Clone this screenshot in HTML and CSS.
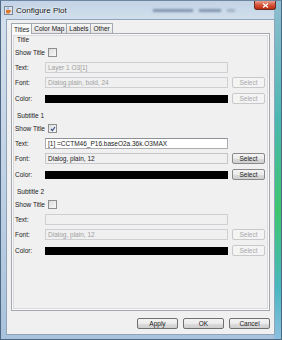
FILE: index.html
```html
<!DOCTYPE html>
<html lang="en">
<head>
    <meta charset="UTF-8">
    <title>Configure Plot</title>
    <link rel="stylesheet" href="styles.css">
</head>
<body>
    <div class="window">
        <div class="titlebar">
            <svg class="app-icon" width="9" height="9" viewBox="0 0 9 9">
                <rect x="0.5" y="0.5" width="8" height="8" fill="#dfe6ee" stroke="#7d8a99"/>
                <path d="M2 4h4v2.5a1 1 0 0 1-1 1h-2a1 1 0 0 1-1-1z" fill="#e07a2a"/>
                <path d="M6 4.5h1v1.2h-1" fill="none" stroke="#e07a2a" stroke-width="0.7"/>
                <path d="M3.2 1.5c-.6.8.6 1.2 0 2M4.6 1.5c-.6.8.6 1.2 0 2" fill="none" stroke="#4a6ea8" stroke-width="0.6"/>
            </svg>
            <span class="caption">Configure Plot</span>
            <div class="ghost">
                <span></span><span></span><span></span>
            </div>
            <div class="close-btn">
                <svg width="7" height="5" viewBox="0 0 7 5"><path d="M1 0.5l5 4M6 0.5l-5 4" stroke="#fff" stroke-width="1.3"/></svg>
            </div>
        </div>

        <div class="frame">
            <div class="client">
                <div class="tabs">
                    <div class="tab active">Titles</div>
                    <div class="tab">Color Map</div>
                    <div class="tab">Labels</div>
                    <div class="tab">Other</div>
                </div>

                <div class="tab-panel">
                    <!-- Title -->
                    <section class="group">
                        <div class="group-title">Title</div>
                        <div class="row">
                            <span class="lbl">Show Title</span>
                            <span class="check"></span>
                        </div>
                        <div class="row">
                            <span class="lbl">Text:</span>
                            <div class="field disabled">Layer 1 O3[1]</div>
                        </div>
                        <div class="row">
                            <span class="lbl">Font:</span>
                            <div class="field disabled">Dialog.plain, bold, 24</div>
                            <button class="select" disabled>Select</button>
                        </div>
                        <div class="row">
                            <span class="lbl">Color:</span>
                            <div class="swatch"></div>
                            <button class="select" disabled>Select</button>
                        </div>
                    </section>

                    <!-- Subtitle 1 -->
                    <section class="group">
                        <div class="group-title">Subtitle 1</div>
                        <div class="row">
                            <span class="lbl">Show Title</span>
                            <span class="check checked">
                                <svg width="6" height="6" viewBox="0 0 6 6"><path d="M1 3l1.5 1.6L5 1" fill="none" stroke="#2d4a86" stroke-width="1.1"/></svg>
                            </span>
                        </div>
                        <div class="row">
                            <span class="lbl">Text:</span>
                            <div class="field">[1] =CCTM46_P16.baseO2a.36k.O3MAX</div>
                        </div>
                        <div class="row">
                            <span class="lbl">Font:</span>
                            <div class="field readonly">Dialog, plain, 12</div>
                            <button class="select">Select</button>
                        </div>
                        <div class="row">
                            <span class="lbl">Color:</span>
                            <div class="swatch"></div>
                            <button class="select">Select</button>
                        </div>
                    </section>

                    <!-- Subtitle 2 -->
                    <section class="group">
                        <div class="group-title">Subtitle 2</div>
                        <div class="row">
                            <span class="lbl">Show Title</span>
                            <span class="check"></span>
                        </div>
                        <div class="row">
                            <span class="lbl">Text:</span>
                            <div class="field disabled"></div>
                        </div>
                        <div class="row">
                            <span class="lbl">Font:</span>
                            <div class="field disabled">Dialog, plain, 12</div>
                            <button class="select" disabled>Select</button>
                        </div>
                        <div class="row">
                            <span class="lbl">Color:</span>
                            <div class="swatch"></div>
                            <button class="select" disabled>Select</button>
                        </div>
                    </section>
                </div>

                <div class="actions">
                    <button class="btn">Apply</button>
                    <button class="btn">OK</button>
                    <button class="btn">Cancel</button>
                </div>
            </div>
        </div>
    </div>
</body>
</html>
```

FILE: styles.css
```css
body {
    margin: 0;
    font-family: "Liberation Sans", Arial, sans-serif;
}
.window {
    width: 282px;
    height: 340px;
    box-sizing: border-box;
    display: flex;
    flex-direction: column;
    border: 1px solid #4e6884;
    border-top-color: #6d86a2;
    background:
        linear-gradient(#8fbcd0, #4bb8b0 35%, #3ec66e 62%, #4ab7c0 85%, #8cbfe0) right / 7px 100% no-repeat,
        linear-gradient(to bottom, #c3d4e6, #d3dfec 20px, #bccfe3 60%, #a9c2dc);
}
.titlebar {
    height: 19px;
    display: flex;
    align-items: center;
    padding-left: 3px;
}
.app-icon {
    flex-shrink: 0;
}
.caption {
    margin-left: 3px;
    font-size: 8px;
    color: #111;
    text-shadow: 0 0 3px #fff, 0 0 2px #fff;
}
.ghost {
    margin-left: auto;
    display: flex;
    gap: 6px;
    filter: blur(0.8px);
}
.ghost span {
    display: block;
    height: 3px;
    width: 40px;
    background: #7f95ad;
}
.ghost span:nth-child(2) {
    width: 22px;
}
.ghost span:nth-child(3) {
    width: 8px;
    background: #9fb2c6;
}
.close-btn {
    align-self: flex-start;
    margin-left: 19px;
    margin-right: 5px;
    width: 22px;
    height: 9px;
    border: 1px solid #6a2a20;
    border-top: none;
    box-sizing: border-box;
    border-radius: 0 0 3px 3px;
    background: linear-gradient(#eaa08c, #d4553a 50%, #c02a10);
    display: flex;
    align-items: center;
    justify-content: center;
}
.frame {
    flex: 1;
    display: flex;
    padding: 0 7px 5px 6px;
}
.client {
    flex: 1;
    background: #f0f0f0;
    box-shadow: 0 0 0 1px #90a5bb;
    padding: 3px 4px 5px 4px;
    display: flex;
    flex-direction: column;
    font-size: 6.5px;
    color: #1a1a1a;
}
.tabs {
    height: 10px;
    display: flex;
    align-items: flex-end;
}
.tab {
    height: 9px;
    padding: 0 2px;
    line-height: 9px;
    border: 1px solid #a3a8ae;
    border-bottom: none;
    margin-right: -1px;
    background: linear-gradient(#f6f6f6, #e4e4e4);
    border-radius: 1px 1px 0 0;
}
.tab.active {
    height: 10px;
    line-height: 11px;
    background: #fafafa;
    position: relative;
    z-index: 1;
    margin-bottom: -1px;
}
.tab-panel {
    height: 278px;
    box-sizing: border-box;
    border: 1px solid #a3a8ae;
    box-shadow: inset 0 0 0 1px #fafafa, inset 0 0 0 2px #dadada;
    padding: 1px 4px 0 3px;
}
.group {
    display: flex;
    flex-direction: column;
    margin-bottom: 7px;
}
.group-title {
    height: 10px;
    line-height: 10px;
    margin-bottom: 2px;
    padding-left: 2px;
}
.row {
    display: grid;
    grid-template-columns: 26px 183px 33px;
    column-gap: 4px;
    height: 11px;
    align-items: center;
    margin-bottom: 4px;
}
.row:last-child {
    margin-bottom: 0;
}
.row:nth-child(4) {
    margin-bottom: 5px;
}
.lbl {
    white-space: nowrap;
}
.check {
    width: 7px;
    height: 7px;
    margin-left: 3px;
    border: 1px solid #8e8f8f;
    background: linear-gradient(135deg, #dcdcdc, #f8f8f8);
    display: flex;
    align-items: center;
    justify-content: center;
}
.field {
    height: 11px;
    box-sizing: border-box;
    border: 1px solid #abadb3;
    border-top-color: #8e9097;
    background: #fff;
    padding-left: 2px;
    line-height: 9px;
    white-space: nowrap;
    overflow: hidden;
}
.field.readonly {
    background: #f0f0f0;
    border-color: #c4c6ca;
}
.field.disabled {
    background: #f0f0f0;
    border-color: #cdcfd2;
    color: #a0a0a0;
}
.swatch {
    height: 8px;
    background: #000;
}
.select {
    height: 11px;
    padding: 0;
    font: inherit;
    color: #1a1a1a;
    border: 1px solid #8a8a8a;
    border-radius: 2px;
    background: linear-gradient(#f4f4f4, #ebebeb 50%, #dcdcdc 51%, #cfcfcf);
}
.select:disabled {
    color: #a8a8a8;
    border-color: #c9c9c9;
    background: #f4f4f4;
}
.actions {
    display: flex;
    justify-content: flex-end;
    gap: 5px;
    margin-top: 7px;
}
.btn {
    width: 41px;
    height: 11px;
    padding: 0;
    font: inherit;
    color: #1a1a1a;
    border: 1px solid #707070;
    border-radius: 2px;
    background: linear-gradient(#f4f4f4, #ebebeb 50%, #dddddd 51%, #cfcfcf);
}
```
